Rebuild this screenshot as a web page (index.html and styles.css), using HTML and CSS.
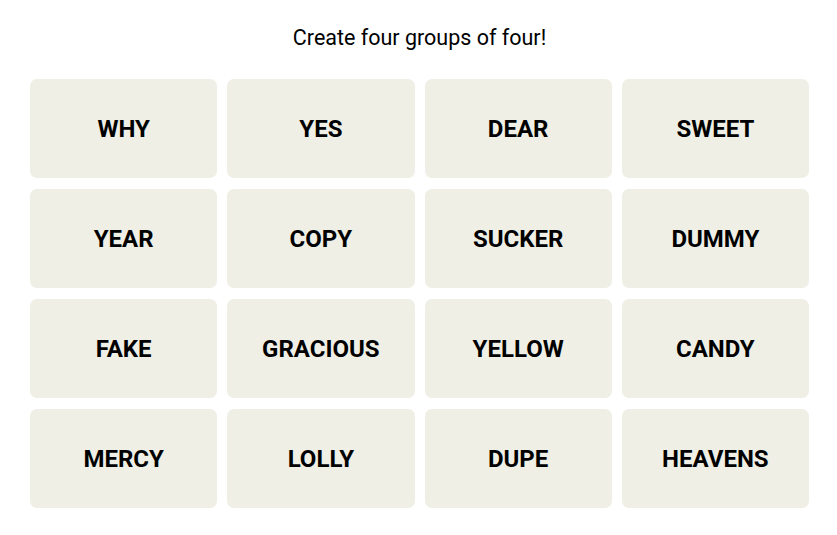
FILE: index.html
```html
<!DOCTYPE html>
<html>
<head>
<meta charset="utf-8">
<link rel="stylesheet" href="styles.css">
</head>
<body>
<main class="game">
  <p class="prompt">Create four groups of four!</p>
  <div class="board">
    <div class="tile">WHY</div>
    <div class="tile">YES</div>
    <div class="tile">DEAR</div>
    <div class="tile">SWEET</div>
    <div class="tile">YEAR</div>
    <div class="tile">COPY</div>
    <div class="tile">SUCKER</div>
    <div class="tile">DUMMY</div>
    <div class="tile">FAKE</div>
    <div class="tile">GRACIOUS</div>
    <div class="tile">YELLOW</div>
    <div class="tile">CANDY</div>
    <div class="tile">MERCY</div>
    <div class="tile">LOLLY</div>
    <div class="tile">DUPE</div>
    <div class="tile">HEAVENS</div>
  </div>
</main>
</body>
</html>
```

FILE: styles.css
```css
html, body {
  margin: 0;
  padding: 0;
  background: #ffffff;
}
.game {
  width: 779px;
  padding: 0 0 0 30px;
  font-family: Roboto, "Liberation Sans", sans-serif;
  color: #000;
}
.prompt {
  margin: 0;
  height: 79px;
  padding-top: 24px;
  box-sizing: border-box;
  text-align: center;
  font-size: 21.5px;
  line-height: 27px;
}
.board {
  display: grid;
  grid-template-columns: repeat(4, 1fr);
  column-gap: 10px;
  row-gap: 11px;
}
.tile {
  height: 99px;
  background: #efefe6;
  border-radius: 7px;
  display: flex;
  align-items: center;
  justify-content: center;
  font-weight: 700;
  font-size: 24px;
  letter-spacing: 0;
}
```
